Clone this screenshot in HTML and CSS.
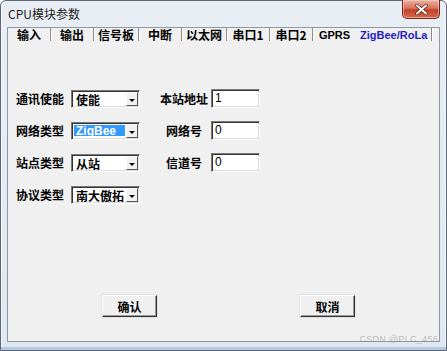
FILE: index.html
```html
<!DOCTYPE html>
<html lang="zh-CN">
<head>
    <meta charset="UTF-8">
    <title>CPU模块参数</title>
    <link rel="stylesheet" href="styles.css">
</head>
<body>
    <div class="window">
        <div class="titlebar">
            <span class="title">CPU模块参数</span>
            <button class="close" title="关闭">
                <svg width="13" height="11" viewBox="0 0 13 11">
                    <path d="M2 1.5 L11 9.5 M11 1.5 L2 9.5" stroke="#5a1a10" stroke-width="3.4" stroke-linecap="round"/>
                    <path d="M2 1.5 L11 9.5 M11 1.5 L2 9.5" stroke="#fff" stroke-width="2" stroke-linecap="round"/>
                </svg>
            </button>
        </div>

        <div class="client">
            <ul class="tabs">
                <li>输入</li>
                <li>输出</li>
                <li>信号板</li>
                <li>中断</li>
                <li>以太网</li>
                <li>串口1</li>
                <li>串口2</li>
                <li class="latin no-sep">GPRS</li>
                <li class="latin active">ZigBee/RoLa</li>
            </ul>

            <div class="form">
                <label class="lbl">通讯使能</label>
                <div class="combo"><span class="value">使能</span><span class="drop"></span></div>
                <label class="lbl2">本站地址</label>
                <div class="edit">1</div>

                <label class="lbl">网络类型</label>
                <div class="combo"><span class="value selected">ZigBee</span><span class="drop"></span></div>
                <label class="lbl2">网络号</label>
                <div class="edit">0</div>

                <label class="lbl">站点类型</label>
                <div class="combo"><span class="value">从站</span><span class="drop"></span></div>
                <label class="lbl2">信道号</label>
                <div class="edit">0</div>

                <label class="lbl">协议类型</label>
                <div class="combo"><span class="value">南大傲拓</span><span class="drop"></span></div>
            </div>

            <div class="actions">
                <button class="btn">确认</button>
                <button class="btn">取消</button>
            </div>
        </div>

        <span class="watermark">CSDN @PLC_456</span>
    </div>
</body>
</html>
```

FILE: styles.css
```css
body {
    margin: 0;
    padding: 0;
    background-color: #ffffff;
    font-family: "Noto Sans CJK SC", "Liberation Sans", sans-serif;
}
.window {
    position: relative;
    box-sizing: border-box;
    width: 447px;
    height: 351px;
    display: flex;
    flex-direction: column;
    background: linear-gradient(#e9eef4, #dfe7f0);
    border: 1px solid #5b6674;
    border-radius: 6px 6px 0 0;
    box-shadow: inset 0 -3px 0 #b3cbe6, inset 1px 0 0 #f7f9fc, inset -1px 0 0 #f7f9fc;
}
.titlebar {
    height: 26px;
    display: flex;
    justify-content: space-between;
    align-items: flex-start;
}
.title {
    padding: 5px 0 0 7px;
    font-size: 12px;
    line-height: 16px;
    color: #1e1e1e;
}
.close {
    width: 38px;
    height: 19px;
    margin: -1px 6px 0 0;
    padding: 0;
    display: flex;
    align-items: center;
    justify-content: center;
    border: 1px solid #6e2a1e;
    border-top: none;
    border-radius: 0 0 5px 5px;
    background: linear-gradient(#eab4a6, #d9735c 45%, #c2412a 55%, #d5694d);
    box-shadow: inset 0 0 0 1px rgba(255, 220, 210, 0.5);
}
.client {
    flex: 1;
    margin: 0 6px 8px 6px;
    display: flex;
    flex-direction: column;
    background-color: #f0f0f0;
    border: 1px solid #8e99a6;
}
.tabs {
    list-style: none;
    margin: 0;
    padding: 0;
    display: flex;
    height: 13px;
}
.tabs li {
    box-sizing: border-box;
    min-width: 43px;
    padding: 0 4px;
    font-size: 12px;
    font-weight: bold;
    line-height: 13px;
    text-align: center;
    color: #000;
    border-right: 1px solid #8a8a8a;
    box-shadow: 1px 0 0 #ffffff;
}
.tabs li.latin {
    font-family: "Liberation Sans", sans-serif;
    font-size: 11px;
    padding-top: 1px;
}
.tabs li.no-sep {
    border-right: none;
    box-shadow: none;
}
.tabs li.active {
    color: #1d1dc4;
}
.form {
    display: grid;
    grid-template-columns: 55px 69px 71px 49px;
    grid-auto-rows: 18px;
    row-gap: 14px;
    padding: 49px 0 0 8px;
}
.lbl, .lbl2 {
    font-size: 12px;
    font-weight: bold;
    line-height: 18px;
    color: #000;
}
.lbl2 {
    padding-left: 17px;
    text-align: center;
}
.combo, .edit {
    box-sizing: border-box;
    background-color: #fff;
    border: 1px solid;
    border-color: #7a7a7a #ffffff #ffffff #7a7a7a;
    box-shadow: inset 1px 1px 0 #333333, inset -1px -1px 0 #dcdcdc;
}
.combo {
    display: flex;
    padding: 1px 1px 1px 1px;
}
.combo .value {
    flex: 1;
    margin: 1px 1px 2px 1px;
    padding-left: 2px;
    font-size: 12px;
    font-weight: bold;
    line-height: 13px;
    color: #000;
}
.combo .value.selected {
    background-color: #3399ff;
    color: #fff;
    font-family: "Liberation Sans", sans-serif;
}
.combo .drop {
    position: relative;
    box-sizing: border-box;
    width: 12px;
    background-color: #f0f0f0;
    border: 1px solid;
    border-color: #ffffff #555555 #555555 #ffffff;
}
.combo .drop::after {
    content: "";
    position: absolute;
    left: 2px;
    top: 6px;
    border-style: solid;
    border-width: 3px 3px 0 3px;
    border-color: #000 transparent transparent transparent;
}
.edit {
    margin-top: -1px;
    padding-left: 3px;
    font-family: "Liberation Sans", sans-serif;
    font-size: 12px;
    line-height: 16px;
    color: #000;
}
.actions {
    margin-top: auto;
    display: flex;
    gap: 143px;
    padding: 0 0 24px 94px;
}
.btn {
    box-sizing: border-box;
    width: 55px;
    height: 22px;
    padding: 0;
    font-family: "Noto Sans CJK SC", sans-serif;
    font-size: 12px;
    font-weight: bold;
    color: #000;
    background-color: #f0f0f0;
    border: 1px solid;
    border-color: #ffffff #333333 #333333 #ffffff;
    box-shadow: inset -1px -1px 0 #9a9a9a, 0 0 0 1px #e0e0e0;
}
.watermark {
    position: absolute;
    right: 8px;
    bottom: 6px;
    font-family: "Liberation Sans", sans-serif;
    font-size: 9px;
    color: rgba(140, 140, 140, 0.55);
    letter-spacing: 0.3px;
}
```
